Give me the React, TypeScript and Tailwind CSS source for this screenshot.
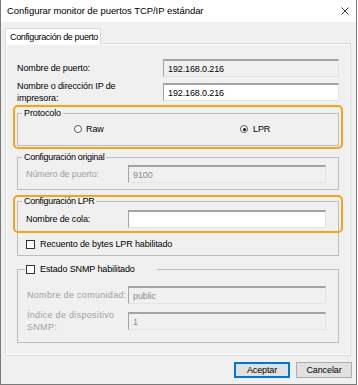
import React from "react";

function Field({ value, white, dim }: { value: string; white?: boolean; dim?: boolean }) {
  return (
    <div
      className={`h-[18px] flex items-center pl-[4px] border-t-2 border-l border-r border-b border-t-[#a3a3a3] border-l-[#a3a3a3] border-r-[#e3e3e3] border-b-[#e3e3e3] ${
        white ? "bg-white" : "bg-[#f0f0f0]"
      } ${dim ? "text-[#8a8a8a]" : "text-black"}`}
    >
      {value}
    </div>
  );
}

function Radio({ checked }: { checked?: boolean }) {
  return (
    <span className="w-[8px] h-[8px] rounded-full border border-[#5a5a5a] bg-white flex items-center justify-center">
      {checked && <span className="w-[3px] h-[3px] rounded-full bg-black" />}
    </span>
  );
}

function Check() {
  return <span className="w-[9px] h-[9px] border border-[#333] bg-white shrink-0" />;
}

export default function App() {
  return (
    <div className="w-[358px] h-[385px] bg-white font-['Liberation_Sans',Arial,sans-serif] text-[9px] leading-[12px] tracking-[-0.12px] text-black">
      <div className="w-[357px] h-[385px] flex flex-col bg-[#f0f0f0] border-x border-b border-[#7a7a7a]">
        {/* title bar */}
        <div className="h-[22px] bg-white flex items-center justify-between pl-[6px] pr-[7px] shrink-0">
          <span className="text-[9.5px] tracking-[-0.05px]">Configurar monitor de puertos TCP/IP estándar</span>
          <svg width="8" height="8" viewBox="0 0 8 8">
            <path d="M0.5 0.5 L7.5 7.5 M7.5 0.5 L0.5 7.5" stroke="#222" strokeWidth="0.9" />
          </svg>
        </div>

        <div className="flex-1 flex flex-col pl-[4px] pr-[5px] pt-[6px]">
          {/* tab */}
          <div className="flex">
            <div className="relative z-10 -mb-px h-[16px] bg-white border border-b-0 border-[#d9d9d9] pl-[4px] pr-[2px] tracking-[-0.35px] flex items-center">
              Configuración de puerto
            </div>
          </div>

          {/* panel */}
          <div className="border border-[#d9d9d9] shadow-[inset_1px_1px_0_#ffffff,inset_-1px_-1px_0_#ffffff] pl-[11px] pr-[11px] pt-[15px] pb-[12px]">
            <div className="flex items-center">
              <span className="w-[146px]">Nombre de puerto:</span>
              <div className="flex-1">
                <Field value="192.168.0.216" />
              </div>
            </div>
            <div className="flex items-center mt-[3px]">
              <span className="w-[146px]">
                Nombre o dirección IP de
                <br />
                impresora:
              </span>
              <div className="flex-1">
                <Field value="192.168.0.216" white />
              </div>
            </div>

            {/* Protocolo */}
            <div className="mt-px -mx-[4px] border-2 border-[#f7a21b] rounded-[5px] px-[2px] pb-px">
              <fieldset className="border border-[#bdbdbd] pb-[10px]">
                <legend className="ml-[4px] px-[2px]">Protocolo</legend>
                <div className="flex items-center h-[12px] mt-[4px] pl-[56px]">
                  <div className="w-[166px] flex items-center gap-[4px]">
                    <Radio />
                    <span>Raw</span>
                  </div>
                  <div className="flex items-center gap-[5px]">
                    <Radio checked />
                    <span>LPR</span>
                  </div>
                </div>
              </fieldset>
            </div>

            {/* Configuración original */}
            <fieldset className="mt-[2px] border border-[#bdbdbd] pb-[6px]">
              <legend className="ml-[4px] px-[2px] tracking-[-0.3px]">Configuración original</legend>
              <div className="flex items-center mt-[2px] pl-[8px] pr-[12px]">
                <span className="w-[102px] text-[#a0a0a0]">Número de puerto:</span>
                <div className="flex-1">
                  <Field value="9100" dim />
                </div>
              </div>
            </fieldset>

            {/* Configuración LPR */}
            <div className="relative mt-[5px]">
              <fieldset className="border border-[#bdbdbd] pb-[5px]">
                <legend className="ml-[4px] px-[2px] tracking-[-0.3px]">Configuración LPR</legend>
                <div className="flex items-center mt-[3px] pl-[8px] pr-[12px]">
                  <span className="w-[102px]">Nombre de cola:</span>
                  <div className="flex-1">
                    <Field value="" white />
                  </div>
                </div>
                <div className="flex items-center gap-[5px] h-[12px] mt-[10px] pl-[8px]">
                  <Check />
                  <span>Recuento de bytes LPR habilitado</span>
                </div>
              </fieldset>
              <div className="absolute -left-[4px] -right-[4px] top-0 h-[38px] border-2 border-[#f7a21b] rounded-[5px] pointer-events-none" />
            </div>

            {/* SNMP */}
            <fieldset className="mt-[7px] border border-[#bdbdbd] pb-[9px]">
              <legend className="ml-[7px] pl-px pr-[22px] flex items-center gap-[5px]">
                <Check />
                <span>Estado SNMP habilitado</span>
              </legend>
              <div className="flex items-center mt-[11px] pl-[9px] pr-[12px]">
                <span className="w-[101px] text-[#a0a0a0] tracking-[0.3px]">Nombre de comunidad:</span>
                <div className="flex-1">
                  <Field value="public" dim />
                </div>
              </div>
              <div className="flex items-center mt-[5px] pl-[9px] pr-[12px]">
                <span className="w-[101px] text-[#a0a0a0] tracking-[0.3px]">
                  Índice de dispositivo
                  <br />
                  SNMP:
                </span>
                <div className="flex-1">
                  <Field value="1" dim />
                </div>
              </div>
            </fieldset>
          </div>

          {/* buttons */}
          <div className="flex justify-end gap-[6px] mt-[6px] -mr-px">
            <button className="w-[56px] h-[16px] bg-[#e1e1e1] border-2 border-[#0078d7] flex items-center justify-center">
              Aceptar
            </button>
            <button className="w-[56px] h-[16px] bg-[#e1e1e1] border border-[#adadad] flex items-center justify-center">
              Cancelar
            </button>
          </div>
        </div>
      </div>
    </div>
  );
}
